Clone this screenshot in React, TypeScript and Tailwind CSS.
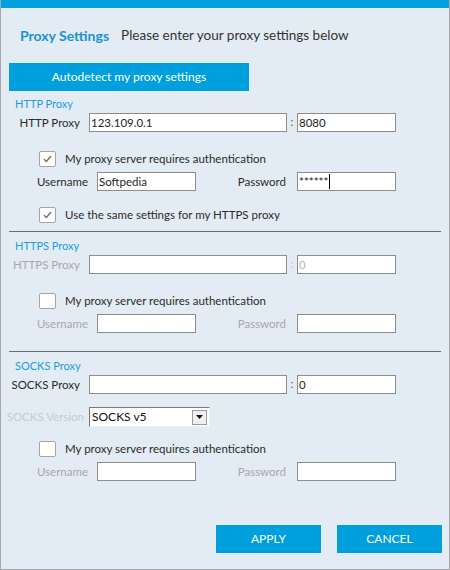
import { ReactNode } from 'react'

const FONT = { fontFamily: 'Lato, "Open Sans", sans-serif' }

function Field({ value = '', width = 'w-[99px]', dim = false, caret = false }: { value?: string; width?: string; dim?: boolean; caret?: boolean }) {
  return (
    <div className={`${width} h-[19px] bg-white border border-[#8c8c8c] flex items-center pl-[1px] text-[11.5px] leading-none ${dim ? 'text-[#b5b5b5]' : 'text-[#1e1e1e]'}`}>
      <span>{value}</span>
      {caret && <span className="w-px h-[15px] bg-black ml-[1px]" />}
    </div>
  )
}

function CheckBox({ checked, label }: { checked: boolean; label: string }) {
  return (
    <div className="flex items-center h-[17px] pl-[38px]">
      <div className="w-[17px] h-[16px] bg-white border border-[#a4a4a4] rounded-[2px] flex items-center justify-center">
        {checked && (
          <svg width="9" height="8" viewBox="0 0 9 8">
            <path d="M1 4.2 L3.4 6.5 L8 1" fill="none" stroke="#707070" strokeWidth="1.4" />
          </svg>
        )}
      </div>
      <span className="ml-[9px] text-[11.5px] text-[#2b2b2b]">{label}</span>
    </div>
  )
}

function SectionTitle({ children }: { children: ReactNode }) {
  return <div className="pl-[14px] h-[16px] flex items-center text-[11px] text-[#1c9ee0]">{children}</div>
}

function HostRow({ label, labelColor, value = '', port, portDim }: { label: string; labelColor: string; value?: string; port: string; portDim?: boolean }) {
  return (
    <div className="flex items-center h-[19px]">
      <div className={`w-[79px] text-right text-[11.5px] whitespace-nowrap ${labelColor}`}>{label}</div>
      <div className="ml-[9px]">
        <Field value={value} width="w-[198px]" />
      </div>
      <span className={`w-[10px] text-center text-[11px] ${portDim ? 'text-[#c0c0c0]' : 'text-[#555]'}`}>:</span>
      <Field value={port} dim={portDim} />
    </div>
  )
}

function AuthRow({ dim, user = '', pass = '', caret = false }: { dim?: boolean; user?: string; pass?: string; caret?: boolean }) {
  const c = dim ? 'text-[#a8a8a8]' : 'text-[#2b2b2b]'
  return (
    <div className="flex items-center h-[19px]">
      <div className={`w-[87px] text-right text-[11.5px] ${c}`}>Username</div>
      <div className="ml-[9px]">
        <Field value={user} />
      </div>
      <div className={`w-[90px] text-right text-[11.5px] ${c}`}>Password</div>
      <div className="ml-[11px]">
        <Field value={pass} caret={caret} />
      </div>
    </div>
  )
}

function Divider() {
  return <div className="mx-[8px] h-px bg-[#6b6b6b]" />
}

export default function App() {
  return (
    <div style={FONT} className="relative w-[450px] h-[570px] bg-[#e3ebf4] border-x border-b border-[#a8a8a8] flex flex-col overflow-hidden">
      <div className="h-[8px] bg-[#00a1de]" />

      <div className="mt-[18px] h-[18px] flex items-center pl-[19px]">
        <span className="text-[14px] font-bold text-[#1a93d6]">Proxy Settings</span>
        <span className="ml-[12px] text-[13.5px] text-[#333]">Please enter your proxy settings below</span>
      </div>

      <button className="mt-[19px] ml-[8px] w-[240px] h-[28px] bg-[#009fde] text-white text-[12px]">
        Autodetect my proxy settings
      </button>

      <div className="mt-[5px]">
        <SectionTitle>HTTP Proxy</SectionTitle>
      </div>
      <div className="mt-[1px]">
        <HostRow label="HTTP Proxy" labelColor="text-[#2b2b2b]" value="123.109.0.1" port="8080" />
      </div>
      <div className="mt-[18px]">
        <CheckBox checked label="My proxy server requires authentication" />
      </div>
      <div className="mt-[5px]">
        <AuthRow user="Softpedia" pass="******" caret />
      </div>
      <div className="mt-[15px]">
        <CheckBox checked label="Use the same settings for my HTTPS proxy" />
      </div>
      <div className="mt-[8px]">
        <Divider />
      </div>

      <div className="mt-[6px]">
        <SectionTitle>HTTPS Proxy</SectionTitle>
      </div>
      <div className="mt-[1px]">
        <HostRow label="HTTPS Proxy" labelColor="text-[#a8a8a8]" port="0" portDim />
      </div>
      <div className="mt-[18px]">
        <CheckBox checked={false} label="My proxy server requires authentication" />
      </div>
      <div className="mt-[5px]">
        <AuthRow dim />
      </div>
      <div className="mt-[18px]">
        <Divider />
      </div>

      <div className="mt-[6px]">
        <SectionTitle>SOCKS Proxy</SectionTitle>
      </div>
      <div className="mt-[1px]">
        <HostRow label="SOCKS Proxy" labelColor="text-[#2b2b2b]" port="0" />
      </div>
      <div className="mt-[13px] flex items-center h-[20px]">
        <div className="w-[83px] text-right text-[11.5px] whitespace-nowrap text-[#c6cbd2]">SOCKS Version</div>
        <div className="ml-[5px] w-[121px] h-[20px] bg-white border border-[#7a7a7a] border-r-[#f0f0f0] border-b-[#f0f0f0] flex items-center pl-[2px] pr-[2px]">
          <span className="flex-1 text-[12px] text-[#111]">SOCKS v5</span>
          <div className="w-[15px] h-[15px] bg-[#f0f0f0] border border-[#9a9a9a] flex items-center justify-center">
            <svg width="7" height="4" viewBox="0 0 7 4">
              <path d="M0 0 L7 0 L3.5 4 Z" fill="#111" />
            </svg>
          </div>
        </div>
      </div>
      <div className="mt-[13px]">
        <CheckBox checked={false} label="My proxy server requires authentication" />
      </div>
      <div className="mt-[5px]">
        <AuthRow dim />
      </div>

      <div className="mt-auto mb-[16px] flex justify-end gap-[16px] pr-[7px]">
        <button className="w-[105px] h-[28px] bg-[#009fde] text-white text-[12px]">APPLY</button>
        <button className="w-[105px] h-[28px] bg-[#009fde] text-white text-[12px]">CANCEL</button>
      </div>
    </div>
  )
}
